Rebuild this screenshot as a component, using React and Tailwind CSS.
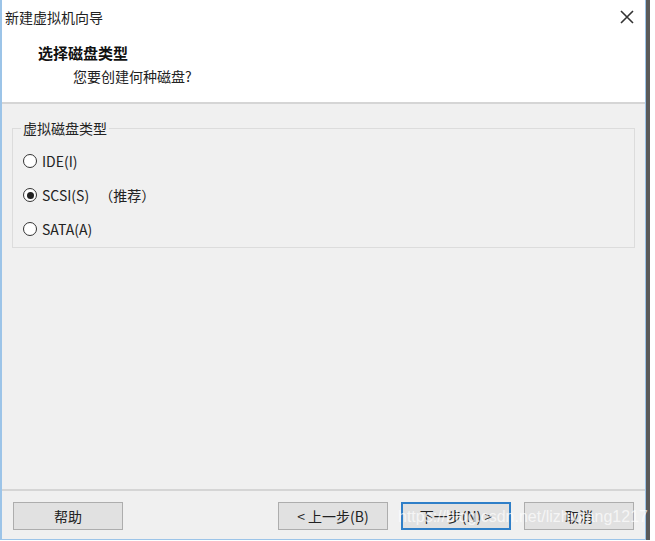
import React from "react";

const font = { fontFamily: '"Noto Sans CJK SC", "Noto Sans", sans-serif' };

function Radio({ label, checked, extra }) {
  return (
    <div className="flex items-center h-[20px]">
      <span className="w-[14px] h-[14px] rounded-full border border-[#333] bg-white flex items-center justify-center">
        {checked && <span className="w-[7px] h-[7px] rounded-full bg-[#222]" />}
      </span>
      <span className="ml-[5px] text-[14px] text-[#222]">{label}</span>
      {extra && <span className="ml-[10px] text-[14px] text-[#222]">{extra}</span>}
    </div>
  );
}

function Btn({ children, primary }) {
  return (
    <button
      className={
        "w-[110px] h-[28px] text-[14px] text-[#222] bg-[#e1e1e1] " +
        (primary ? "border-2 border-[#2f7fc8]" : "border border-[#adadad]")
      }
    >
      {children}
    </button>
  );
}

export default function App() {
  return (
    <div className="w-[655px] h-[541px] bg-white flex overflow-hidden" style={font}>
      <div className="w-[646px] h-[540px] flex flex-col border-l-2 border-r border-b border-[#9cc4e8]">
        <div className="h-[104px] bg-white border-b-2 border-[#d5d5d5]">
          <div className="flex items-center justify-between h-[34px] pl-[3px] pr-[10px]">
            <span className="text-[14px] text-[#222]">新建虚拟机向导</span>
            <svg width="16" height="16" viewBox="0 0 16 16">
              <path d="M2 2 L14 14 M14 2 L2 14" stroke="#333" strokeWidth="1.6" fill="none" />
            </svg>
          </div>
          <div className="pl-[36px] mt-[9px] text-[15px] font-bold text-[#111] leading-[20px]">选择磁盘类型</div>
          <div className="pl-[71px] mt-[3px] text-[14px] text-[#222] leading-[20px]">您要创建何种磁盘?</div>
        </div>
        <div className="flex-1 bg-[#f0f0f0] flex flex-col">
          <fieldset className="mx-[10px] mt-[14px] h-[130px] border border-[#dcdcdc] px-[10px]">
            <legend className="px-[2px] ml-[-2px] text-[14px] text-[#222]">虚拟磁盘类型</legend>
            <div className="flex flex-col gap-[14px] mt-[12px]">
              <Radio label="IDE(I)" />
              <Radio label="SCSI(S)" checked extra="（推荐）" />
              <Radio label="SATA(A)" />
            </div>
          </fieldset>
          <div className="flex-1" />
          <div className="border-t-2 border-[#d5d5d5] h-[50px] relative flex items-start pt-[11px] pl-[11px]">
            <Btn>帮助</Btn>
            <div className="ml-[155px] flex gap-[13px]">
              <Btn>&lt; 上一步(B)</Btn>
              <Btn primary>下一步(N) &gt;</Btn>
              <Btn>取消</Btn>
            </div>
            <span
              className="absolute left-[396px] top-[16px] text-[16px] leading-[20px] text-white/70 pointer-events-none whitespace-nowrap"
              style={{ fontFamily: '"Liberation Sans", sans-serif' }}
            >
              https://blog.csdn.net/lizhiqiang1217
            </span>
          </div>
        </div>
      </div>
      <div className="w-[4px] h-[540px] bg-[#5a5a5a]" />
    </div>
  );
}
